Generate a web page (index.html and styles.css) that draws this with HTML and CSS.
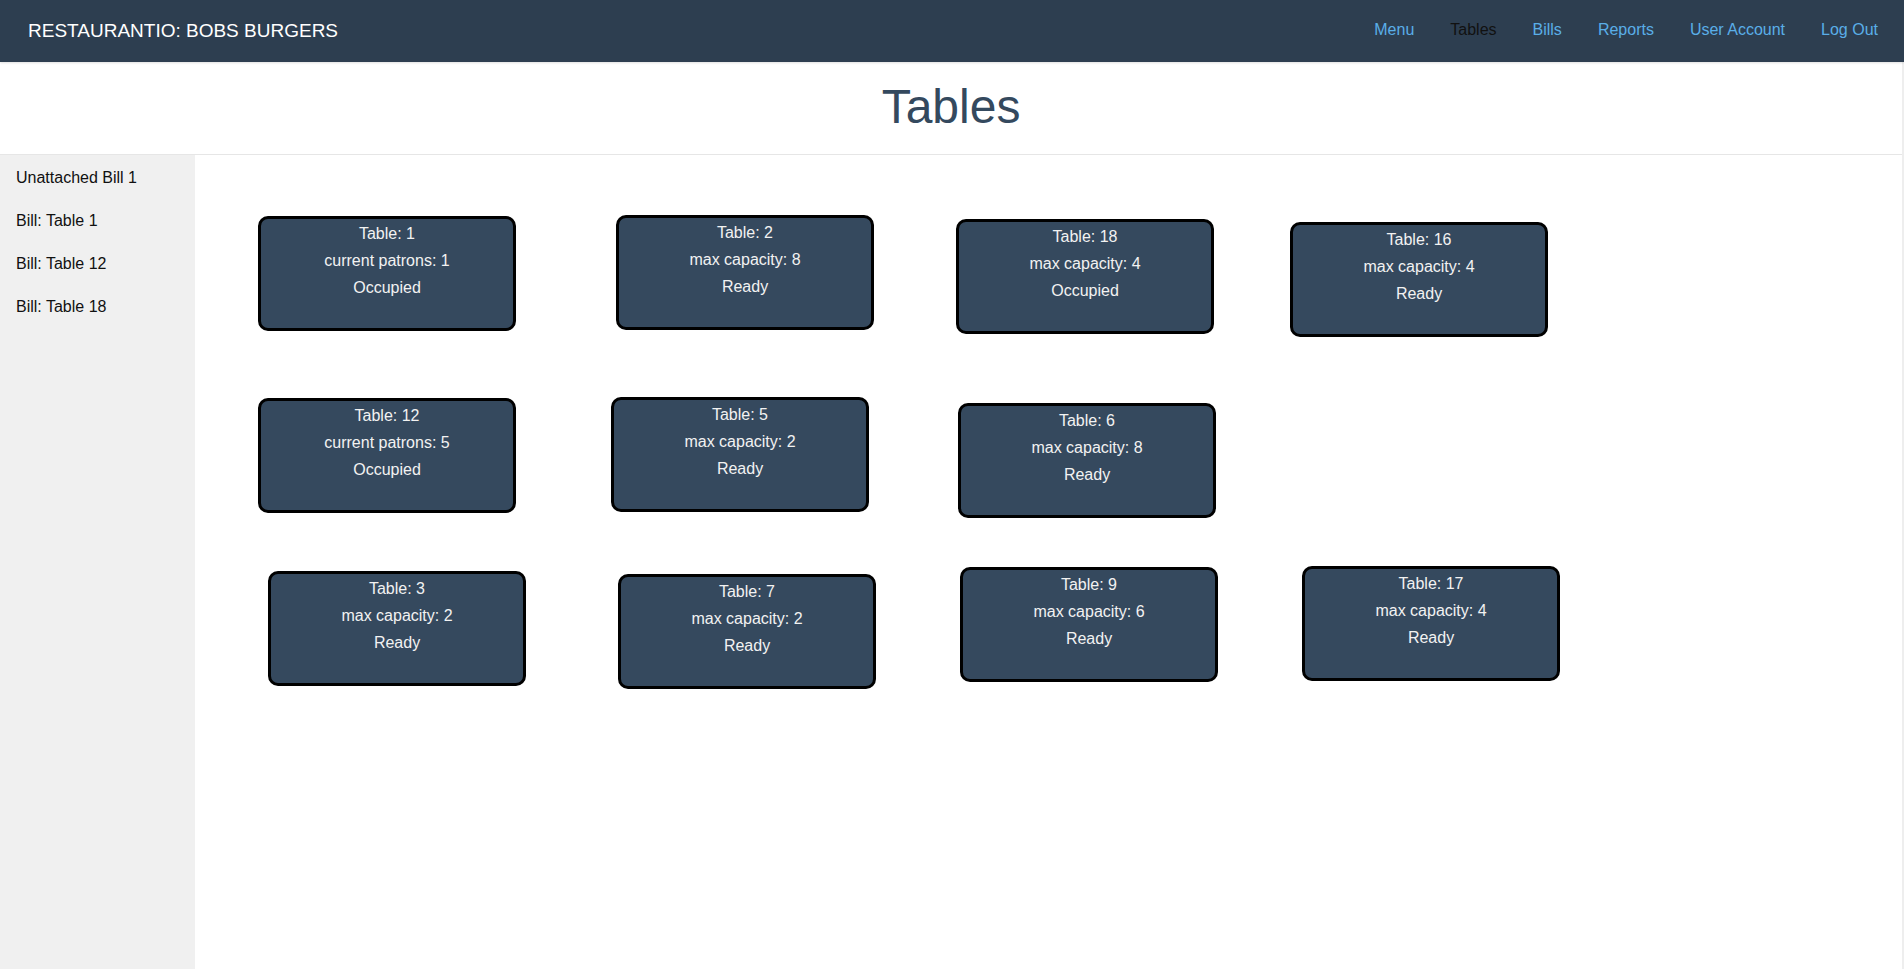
FILE: index.html
```html
<!DOCTYPE html>
<html lang="en">
<head>
<meta charset="utf-8">
<title>Restaurantio - Tables</title>
<link rel="stylesheet" href="styles.css">
</head>
<body>
<header class="topbar">
  <div class="brand">RESTAURANTIO: BOBS BURGERS</div>
  <nav class="nav">
    <a class="nav-link" href="#">Menu</a>
    <a class="nav-link active" href="#">Tables</a>
    <a class="nav-link" href="#">Bills</a>
    <a class="nav-link" href="#">Reports</a>
    <a class="nav-link" href="#">User Account</a>
    <a class="nav-link" href="#">Log Out</a>
  </nav>
</header>
<div class="page">
  <div class="page-title"><h1>Tables</h1></div>
  <div class="main">
    <aside class="sidebar">
      <div class="bill">Unattached Bill 1</div>
      <div class="bill">Bill: Table 1</div>
      <div class="bill">Bill: Table 12</div>
      <div class="bill">Bill: Table 18</div>
    </aside>
    <section class="floor">
      <div class="table-card" style="left:63px;top:61px"><div>Table: 1</div><div>current patrons: 1</div><div>Occupied</div></div>
      <div class="table-card" style="left:421px;top:60px"><div>Table: 2</div><div>max capacity: 8</div><div>Ready</div></div>
      <div class="table-card" style="left:761px;top:64px"><div>Table: 18</div><div>max capacity: 4</div><div>Occupied</div></div>
      <div class="table-card" style="left:1095px;top:67px"><div>Table: 16</div><div>max capacity: 4</div><div>Ready</div></div>
      <div class="table-card" style="left:63px;top:243px"><div>Table: 12</div><div>current patrons: 5</div><div>Occupied</div></div>
      <div class="table-card" style="left:416px;top:242px"><div>Table: 5</div><div>max capacity: 2</div><div>Ready</div></div>
      <div class="table-card" style="left:763px;top:248px"><div>Table: 6</div><div>max capacity: 8</div><div>Ready</div></div>
      <div class="table-card" style="left:73px;top:416px"><div>Table: 3</div><div>max capacity: 2</div><div>Ready</div></div>
      <div class="table-card" style="left:423px;top:419px"><div>Table: 7</div><div>max capacity: 2</div><div>Ready</div></div>
      <div class="table-card" style="left:765px;top:412px"><div>Table: 9</div><div>max capacity: 6</div><div>Ready</div></div>
      <div class="table-card" style="left:1107px;top:411px"><div>Table: 17</div><div>max capacity: 4</div><div>Ready</div></div>
    </section>
  </div>
</div>
</body>
</html>
```
FILE: styles.css
```css
* { box-sizing: border-box; }
html, body { margin: 0; padding: 0; height: 100%; }
body {
  font-family: "Liberation Sans", Arial, sans-serif;
  background: #ffffff;
  display: flex;
  flex-direction: column;
  overflow: hidden;
}
.topbar {
  height: 62px;
  flex: 0 0 62px;
  background: #2d3e50;
  display: flex;
  align-items: center;
  justify-content: space-between;
  padding: 0 8px 0 28px;
  box-shadow: 0 1px 2px rgba(0,0,0,0.12);
  position: relative;
  z-index: 1;
}
.brand {
  color: #ffffff;
  font-size: 19px;
  line-height: 22px;
}
.nav { display: flex; align-items: center; }
.nav-link {
  color: #5aaee8;
  text-decoration: none;
  font-size: 16px;
  line-height: 20px;
  padding: 0 18px;
  margin-top: -2px;
}
.nav-link.active { color: #111111; }
.page {
  flex: 1;
  display: flex;
  flex-direction: column;
  border-right: 2px solid #eeeeee;
}
.page-title {
  height: 93px;
  flex: 0 0 93px;
  border-bottom: 1px solid #e6e6e6;
  display: flex;
  align-items: center;
  justify-content: center;
  padding-bottom: 4px;
}
.page-title h1 {
  margin: 0;
  font-weight: normal;
  font-size: 48px;
  line-height: 55px;
  color: #34495e;
}
.main {
  flex: 1;
  display: flex;
}
.sidebar {
  width: 195px;
  flex: 0 0 195px;
  background: #f0f0f0;
  padding-top: 1px;
}
.bill {
  font-size: 16px;
  line-height: 19px;
  padding: 12px 16px;
  color: #111111;
}
.floor {
  flex: 1;
  position: relative;
}
.table-card {
  position: absolute;
  width: 258px;
  height: 115px;
  background: #35495e;
  border: 3px solid #000000;
  border-radius: 10px;
  color: #f2f2f2;
  text-align: center;
  font-size: 16px;
  line-height: 27px;
  padding-top: 1px;
}
```
